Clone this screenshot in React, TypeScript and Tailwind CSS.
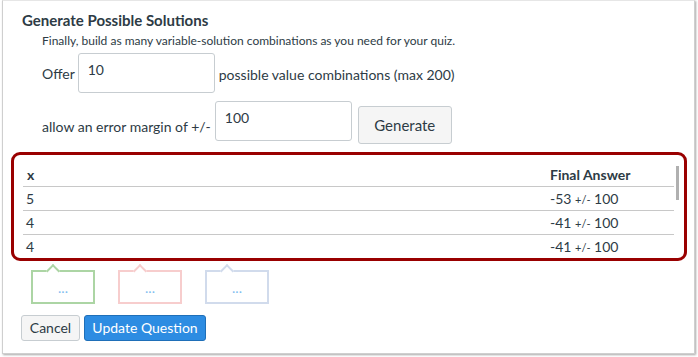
import React from "react";

const rows = [
  { x: "5", a: "-53" },
  { x: "4", a: "-41" },
  { x: "4", a: "-41" },
];

function Bubble({ border }: { border: string }) {
  return (
    <div className={`relative w-[64px] h-[34px] border-2 ${border} bg-white flex items-center justify-center`}>
      <div className={`absolute -top-[6px] left-[15px] w-[10px] h-[10px] rotate-45 border-t-2 border-l-2 ${border} bg-white`} />
      <span className="relative text-[14px] text-[#7fbdf0] leading-none mt-[2px]">...</span>
    </div>
  );
}

export default function App() {
  return (
    <div className="w-[698px] h-[357px] bg-white" style={{ fontFamily: "Lato, 'Open Sans', sans-serif" }}>
      <div className="ml-[2px] w-[693px] h-[354px] border border-[#cfcfcf] border-t-[#e6e6e6] shadow-[1px_1px_2px_rgba(0,0,0,0.35)] bg-white text-[#2d3b45] flex flex-col">
        <div className="pl-[19px] pt-[9px]">
          <h2 className="text-[15px] font-bold leading-[20px]">Generate Possible Solutions</h2>
          <p className="pl-[20px] mt-[4px] text-[12px] leading-[14px]">
            Finally, build as many variable-solution combinations as you need for your quiz.
          </p>
          <div className="pl-[20px] mt-[5px] flex items-center text-[14px]">
            <span>Offer</span>
            <div className="ml-[3px] w-[137px] h-[40px] border border-[#c7cdd1] rounded-[3px] pl-[9px] pt-[7px] leading-[18px]">10</div>
            <span className="ml-[4px] mt-[2px]">possible value combinations (max 200)</span>
          </div>
          <div className="pl-[20px] mt-[8px] flex items-start text-[14px]">
            <span className="mt-[15px]">allow an error margin of +/-</span>
            <div className="ml-[4px] w-[137px] h-[40px] border border-[#c7cdd1] rounded-[3px] pl-[9px] pt-[7px] leading-[18px]">100</div>
            <button className="ml-[6px] mt-[5px] w-[94px] h-[38px] border border-[#c7cdd1] rounded-[3px] bg-[#f5f5f5] text-[15px] text-[#2d3b45]">Generate</button>
          </div>
        </div>
        <div className="ml-[8px] mt-[8px] w-[676px] h-[109px] border-[3px] border-[#990000] rounded-[9px] relative pl-[9px] pr-[10px] pt-[7px]">
          <div className="absolute right-[5px] top-[11px] w-[3px] h-[34px] bg-[#b0b0b0]" />
          <table className="w-full text-[14px] border-collapse">
            <thead>
              <tr className="border-b border-[#c8c8c8]">
                <th className="text-left font-bold pl-[4px] h-[24px] pt-[2px]">x</th>
                <th className="text-left font-bold w-[124px] pt-[2px]">Final Answer</th>
              </tr>
            </thead>
            <tbody>
              {rows.map((r, i) => (
                <tr key={i} className={i < rows.length - 1 ? "border-b border-[#c8c8c8]" : ""}>
                  <td className="pl-[3px] h-[24px] pt-[1px]">{r.x}</td>
                  <td className="pt-[1px]">
                    {r.a} <span className="text-[11px]">+/-</span> 100
                  </td>
                </tr>
              ))}
            </tbody>
          </table>
        </div>
        <div className="ml-[28px] mt-[9px] flex gap-[23px]">
          <Bubble border="border-[#acd5a4]" />
          <Bubble border="border-[#f7cdcd]" />
          <Bubble border="border-[#d1dbec]" />
        </div>
        <div className="ml-[18px] mt-[11px] flex gap-[4px]">
          <button className="w-[59px] h-[26px] border border-[#c7cdd1] rounded-[3px] bg-[#f5f5f5] text-[14px] text-[#2d3b45] leading-none">Cancel</button>
          <button className="w-[122px] h-[26px] border border-[#1f6fb8] rounded-[3px] bg-[#2d8ce2] text-[14px] text-white leading-none">Update Question</button>
        </div>
      </div>
    </div>
  );
}
